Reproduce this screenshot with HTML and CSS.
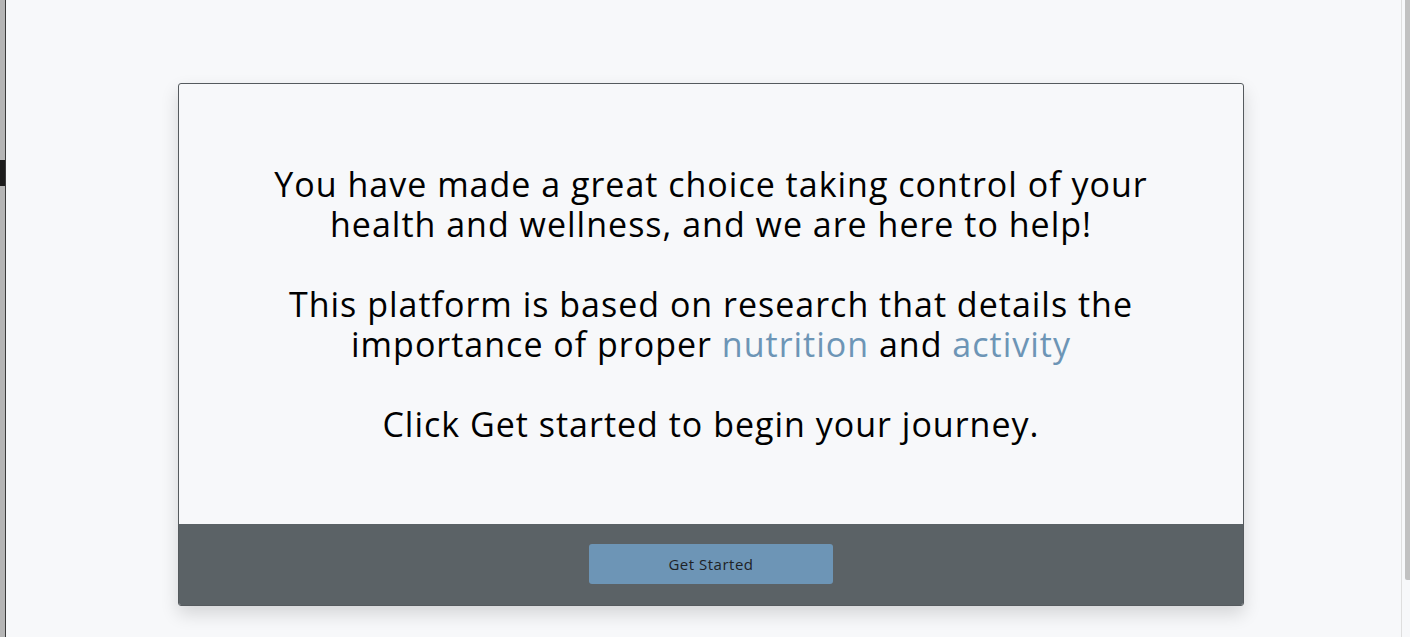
FILE: index.html
```html
<!DOCTYPE html>
<html>
<head>
<meta charset="utf-8">
<link rel="stylesheet" href="styles.css">
</head>
<body>
<div class="edge-left"><div class="edge-mark"></div></div>
<main class="main">
  <section class="card">
    <div class="card-body">
      <p class="msg">You have made a great choice taking control of your health and wellness, and we are here to help!</p>
      <p class="msg">This platform is based on research that details the importance of proper <a class="link" href="#">nutrition</a> and <a class="link" href="#">activity</a></p>
      <p class="msg">Click Get started to begin your journey.</p>
    </div>
    <div class="card-footer">
      <button class="btn">Get Started</button>
    </div>
  </section>
</main>
<div class="edge-right"><div class="thumb"></div></div>
</body>
</html>
```
FILE: styles.css
```css
html, body { margin: 0; height: 100%; }
body {
  display: flex;
  background: #f7f8fa;
  font-family: "Open Sans", Lato, sans-serif;
  overflow: hidden;
}
.edge-left {
  width: 5px;
  flex: none;
  background: #b5b5b5;
  border-right: 1px solid #3b3b3b;
}
.edge-mark {
  margin-top: 160px;
  height: 26px;
  background: #1c1c1c;
}
.main {
  flex: 1;
  padding: 83px 0 0 172px;
}
.card {
  width: 1064px;
  border: 1px solid #555a5e;
  border-radius: 3px;
  background: #f7f8fa;
  box-shadow: 0 8px 18px rgba(0,0,0,0.14);
  overflow: hidden;
}
.card-body {
  height: 440px;
  box-sizing: border-box;
  padding-top: 80px;
  text-align: center;
  color: #000;
}
.msg {
  width: 920px;
  margin: 0 auto 40px;
  font-size: 34px;
  letter-spacing: 1px;
  line-height: 40px;
}
.link { color: #6d95b6; text-decoration: none; }
.card-footer {
  height: 81px;
  background: #5b6266;
  display: flex;
  justify-content: center;
  align-items: flex-start;
  padding-top: 20px;
  box-sizing: border-box;
}
.btn {
  width: 244px;
  height: 40px;
  margin-left: 0;
  border: none;
  border-radius: 3px;
  background: #6d95b6;
  color: #1d2226;
  font-family: "Open Sans", Lato, sans-serif;
  font-size: 15px;
  letter-spacing: 0.5px;
}
.edge-right {
  width: 8px;
  flex: none;
  border-left: 1px solid #dedede;
  background: #f7f8fa;
  display: flex;
  justify-content: flex-end;
}
.thumb {
  width: 5px;
  height: 580px;
  background: #c1c1c1;
  border-bottom-left-radius: 2px;
}
```
